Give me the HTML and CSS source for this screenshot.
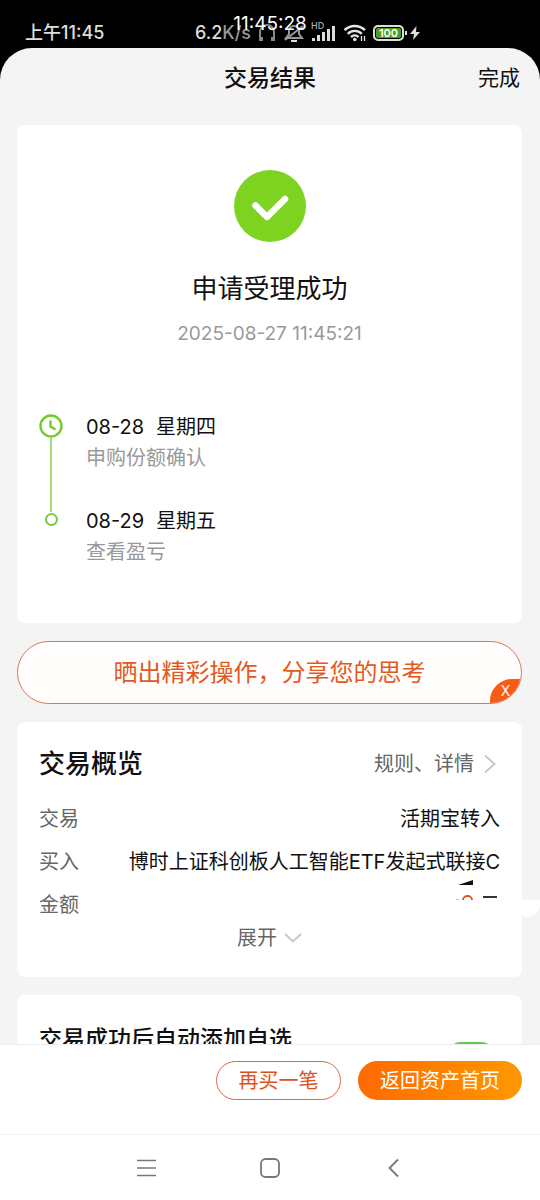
FILE: index.html
```html
<!DOCTYPE html>
<html lang="zh-CN">
<head>
<meta charset="utf-8">
<meta name="viewport" content="width=device-width, initial-scale=1">
<title>交易结果</title>
<link rel="stylesheet" href="styles.css">
</head>
<body>
<div class="status">
  <span class="status-time">上午11:45</span>
  <div class="status-icons">
    <span class="speed">6.2<span class="dim">K/s</span></span>
    <svg width="20" height="20" viewBox="0 0 20 20" fill="none" stroke="#888" stroke-width="2"><path d="M3 15V9a7 7 0 0 1 14 0v6"/><path d="M4 14v4M16 14v4" stroke-width="4"/></svg>
    <svg width="22" height="20" viewBox="0 0 22 20" fill="none" stroke="#999" stroke-width="2"><path d="M3 15h16l-3-4V8a5 5 0 0 0-10 0v3z"/><path d="M2 17L20 3"/><path d="M8 18h6" stroke="#ddd"/></svg>
    <svg width="26" height="24" viewBox="0 0 26 24"><g fill="#ddd"><rect x="1" y="17" width="3" height="3"/><rect x="6" y="14" width="3" height="6"/><rect x="11" y="11" width="3" height="9"/><rect x="16" y="8" width="3" height="12"/><rect x="21" y="5" width="3" height="15"/></g><text x="0" y="8" class="hd">HD</text></svg>
    <svg width="24" height="18" viewBox="0 0 24 18" fill="none" stroke="#e4e4e4" stroke-width="2.4"><path d="M1.5 6.2a14.500 14.500 0 0 1 20.500 0M4.800 9.800a9.800 9.800 0 0 1 14 0M8 13a5.500 5.500 0 0 1 7.500 0"/><circle cx="11.800" cy="15.500" r="1.800" fill="#e4e4e4" stroke="none"/><path d="M18.500 17v-5M21.500 12v5" stroke-width="1.300"/></svg>
    <span class="battery">100</span>
    <svg width="10" height="14" viewBox="0 0 10 14"><path d="M6.500 0L0 8h4L3 14l7-8H6z" fill="#ddd"/></svg>
  </div>
  <span class="clock">11:45:28</span>
</div>
<div class="sheet">
  <header class="titlebar">
    <h1>交易结果</h1>
    <button class="done">完成</button>
  </header>
  <main class="content">
    <section class="card result">
      <svg class="check" width="72" height="72" viewBox="0 0 72 72"><circle cx="36" cy="36" r="36" fill="#7ed321"/><path d="M21.500 35.500L33 47 51 29" fill="none" stroke="#fff" stroke-width="6.500" stroke-linecap="round" stroke-linejoin="round"/></svg>
      <h2>申请受理成功</h2>
      <p class="stamp">2025-08-27 11:45:21</p>
      <ol class="steps">
        <li>
          <div class="rail"><svg width="24" height="24" viewBox="0 0 24 24" fill="none" stroke="#73cc2e" stroke-width="2.400"><circle cx="12" cy="12" r="10.500"/><path d="M11.500 6.500v6l5 3"/></svg><i class="line"></i></div>
          <div class="step"><p class="day"><span>08-28</span><span>星期四</span></p><p class="note">申购份额确认</p></div>
        </li>
        <li>
          <div class="rail"><i class="dot"></i></div>
          <div class="step"><p class="day"><span>08-29</span><span>星期五</span></p><p class="note">查看盈亏</p></div>
        </li>
      </ol>
    </section>
    <div class="share">
      <button class="share-main">晒出精彩操作，分享您的思考</button>
      <button class="share-close" aria-label="关闭"><span>X</span></button>
    </div>
    <section class="card overview">
      <div class="overview-head">
        <h2>交易概览</h2>
        <a href="#rules">规则、详情<svg width="12" height="20" viewBox="0 0 12 20" fill="none" stroke="#c8c8c8" stroke-width="2"><path d="M1 1.500l9.500 8.500L1 18.500"/></svg></a>
      </div>
      <dl>
        <div><dt>交易</dt><dd>活期宝转入</dd></div>
        <div><dt>买入</dt><dd>博时上证科创板人工智能ETF发起式联接C</dd></div>
        <div><dt>金额</dt><dd><svg class="amount" width="44" height="22" viewBox="0 0 44 22"><path d="M2 5L17 0v5z" fill="#111"/><path d="M7 20a4.500 4 0 0 1 9 0" fill="none" stroke="#d9541e" stroke-width="1.800"/><path d="M0 19.500h3" stroke="#eba98c"/><path d="M27 17h14" stroke="#333" stroke-width="2"/><path d="M5 20h14v2H5z" fill="#fff"/></svg></dd></div>
      </dl>
      <button class="expand">展开<svg width="18" height="10" viewBox="0 0 18 10" fill="none" stroke="#c8c8c8" stroke-width="2"><path d="M1 1l8 7.500L17 1"/></svg></button>
      <span class="smear"></span>
    </section>
    <section class="card auto">
      <label for="auto">交易成功后自动添加自选</label>
      <input id="auto" class="switch" type="checkbox" checked>
    </section>
  </main>
  <footer class="actions">
    <button class="again">再买一笔</button>
    <button class="home">返回资产首页</button>
  </footer>
  <nav class="nav">
    <button aria-label="菜单"><svg width="20" height="20" viewBox="0 0 20 20" stroke="#777" stroke-width="1.600"><path d="M0 2.500h19M0 10h19M0 17.500h19"/></svg></button>
    <button aria-label="主页"><svg width="20" height="20" viewBox="0 0 20 20" fill="none" stroke="#777" stroke-width="1.800"><rect x="1" y="1" width="18" height="18" rx="4.500"/></svg></button>
    <button aria-label="返回"><svg width="20" height="20" viewBox="0 0 20 20" fill="none" stroke="#777" stroke-width="1.800"><path d="M15 1.500L6.500 10l8.500 8.500"/></svg></button>
  </nav>
</div>
</body>
</html>
```
FILE: styles.css
```css
* { box-sizing: border-box; margin: 0; padding: 0; }
body {
  display: flex; flex-direction: column; height: 100vh; background: #000; color: #111;
  font-family: Inter, "Noto Sans CJK SC", sans-serif; font-size: 20px; line-height: 30px;
}
button { border: 0; background: none; font: inherit; color: inherit; cursor: pointer; }
svg { display: block; flex: none; }
h1, h2 { font-weight: 500; }
ol { list-style: none; }

.status { position: relative; display: flex; justify-content: space-between; height: 48px; padding: 17px 120px 0 25px; color: #ddd; font-size: 18px; line-height: 32px; }
.status-icons { display: flex; align-items: center; gap: 6px; height: 32px; }
.speed, .status-time { font-weight: 500; }
.dim { color: #999; }
.hd { font: 500 9px Inter, sans-serif; fill: #aaa; }
.battery { position: relative; width: 31px; height: 16px; border: 2px solid #ddd; border-radius: 5px; background: #4a9e26; box-shadow: inset 0 0 0 1px #000; color: #fff; font-size: 11px; font-weight: 600; line-height: 12px; text-align: center; }
.battery::after { content: ""; position: absolute; right: -5px; top: 4px; width: 2px; height: 4px; background: #ddd; }
.clock { position: absolute; left: 0; right: 0; top: 8px; color: #fff; font-size: 19px; text-align: center; }

.sheet { flex: 1; min-height: 0; display: flex; flex-direction: column; overflow: hidden; border-radius: 32px 32px 0 0; background: #f4f4f4; }
.titlebar { display: grid; grid-template-columns: 1fr auto 1fr; align-items: center; height: 60px; padding: 0 20px; }
.titlebar h1 { grid-column: 2; font-size: 23px; }
.done { justify-self: end; font-size: 21px; }

.content { flex: 1; min-height: 0; overflow: hidden; display: flex; flex-direction: column; gap: 18px; padding: 17px 18px 0 17px; }
.card { flex: none; padding: 0 22px; border-radius: 8px; background: #fff; }
.result { padding-top: 45px; padding-bottom: 56px; text-align: center; }
.check { margin: 0 auto; }
.result h2 { margin-top: 27px; font-size: 26px; line-height: 40px; font-weight: 400; }
.stamp { margin-top: 10px; color: #999; font-size: 19px; }
.steps { margin-top: 62px; text-align: left; }
.steps li { display: flex; gap: 23px; min-height: 94px; }
.steps li:last-child { min-height: 0; }
.rail { display: flex; flex-direction: column; align-items: center; width: 24px; padding-top: 3px; }
.line { flex: 1; width: 2px; margin-bottom: -7px; background: #a5db78; }
.dot { width: 13px; height: 13px; margin-top: 5px; border: 2px solid #79c94a; border-radius: 50%; }
.day { display: flex; gap: 12px; line-height: 32px; }
.note { color: #999; line-height: 30px; }

.share { position: relative; flex: none; display: flex; height: 63px; overflow: hidden; border: 1px solid #e0764c; border-radius: 32px; background: #fffefd; }
.share-main { flex: 1; color: #e2591f; font-size: 24px; }
.share-close { position: absolute; right: 0; bottom: 0; width: 31px; height: 24px; border-radius: 22px 0 0 0; background: #f85b13; color: #fff; font-size: 14px; line-height: 24px; }

.overview { position: relative; padding-bottom: 24px; }
.overview-head { display: flex; align-items: center; justify-content: space-between; padding: 22px 4px 20px 0; }
.overview-head h2 { font-size: 26px; line-height: 40px; }
.overview-head a { display: flex; align-items: center; gap: 10px; color: #666; text-decoration: none; }
dl { display: flex; flex-direction: column; gap: 13px; }
dl div { display: flex; justify-content: space-between; height: 30px; }
dt { color: #666; }
.amount { margin-top: -10px; }
.expand { display: flex; align-items: center; gap: 7px; margin: 3px auto 0; color: #666; }
.smear { position: absolute; left: 100%; top: 178px; width: 18px; height: 17px; border-radius: 0 0 18px 6px; background: #fff; }

.auto { display: flex; justify-content: space-between; padding: 27px 26px 26px 22px; }
.auto label { font-size: 23px; line-height: 34px; font-weight: 500; }
.switch { appearance: none; width: 50px; height: 30px; margin-top: 20px; border-radius: 15px; background: radial-gradient(circle at 35px 15px, #fff 12px, #62c554 13px); }

.actions { display: flex; justify-content: flex-end; gap: 17px; height: 90px; padding: 16px 18px 0; border-top: 1px solid #eee; background: #fff; }
.actions button { height: 39px; border-radius: 20px; }
.again { width: 125px; border: 1px solid #dc6b42; color: #dc531c; }
.home { width: 164px; background: linear-gradient(90deg, #ff6a00, #ff9800); color: #fff; }
.nav { display: flex; align-items: center; justify-content: center; gap: 103px; height: 66px; border-top: 1px solid #f3f3f3; background: #fff; }
.nav button { display: flex; }
```
